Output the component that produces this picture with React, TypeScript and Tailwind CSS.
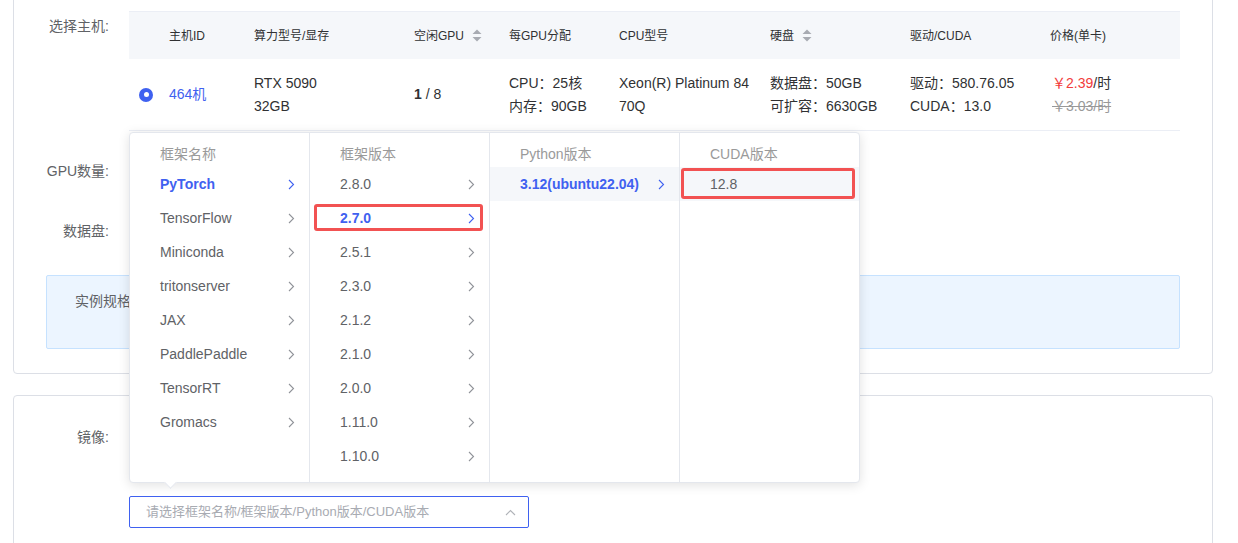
import React from 'react';

const BLUE = 'text-[#3f61f0]';

type Col = {
  title: string;
  width: string;
  items: string[];
  active?: number;
  hover?: number;
  boxed?: number;
  boxInset?: string;
  arrow?: boolean;
};

const columns: Col[] = [
  {
    title: '框架名称',
    width: 'w-[180px]',
    items: ['PyTorch', 'TensorFlow', 'Miniconda', 'tritonserver', 'JAX', 'PaddlePaddle', 'TensorRT', 'Gromacs'],
    active: 0,
    arrow: true,
  },
  {
    title: '框架版本',
    width: 'w-[180px]',
    items: ['2.8.0', '2.7.0', '2.5.1', '2.3.0', '2.1.2', '2.1.0', '2.0.0', '1.11.0', '1.10.0'],
    active: 1,
    boxed: 1,
    boxInset: 'top-[3px] bottom-[4px] left-[4px] right-[6px]',
    arrow: true,
  },
  {
    title: 'Python版本',
    width: 'w-[190px]',
    items: ['3.12(ubuntu22.04)'],
    active: 0,
    hover: 0,
    arrow: true,
  },
  {
    title: 'CUDA版本',
    width: 'flex-1',
    items: ['12.8'],
    hover: 0,
    boxed: 0,
    boxInset: 'top-[1px] bottom-[2px] left-[1px] right-[4px]',
  },
];

function Chevron({ className }: { className?: string }) {
  return (
    <svg width="7" height="11" viewBox="0 0 7 11" className={className} fill="none">
      <path d="M1 1l4.5 4.5L1 10" stroke="currentColor" strokeWidth="1.1" />
    </svg>
  );
}

function SortIcon() {
  return (
    <svg width="10" height="13" viewBox="0 0 10 13" className="ml-[8px] text-[#a8abb2]" fill="currentColor">
      <path d="M5 0.5L9.5 5H0.5z" />
      <path d="M5 12.5L9.5 8H0.5z" />
    </svg>
  );
}

function Cascader() {
  return (
    <div className="absolute left-0 bottom-[45px] w-[731px] h-[351px] bg-white border border-[#e4e7ed] rounded-[4px] shadow-[0_2px_12px_rgba(0,0,0,0.12)] flex z-10">
      {columns.map((col, ci) => (
        <div key={ci} className={`${col.width} h-full ${ci < 3 ? 'border-r border-[#e4e7ed]' : ''}`}>
          <div className="h-[34px] pt-[12px] pl-[30px] leading-[18px] text-[14px] text-[#9a9a9a]">{col.title}</div>
          {col.items.map((it, ii) => {
            const active = col.active === ii;
            const hover = col.hover === ii;
            return (
              <div
                key={it}
                className={`relative h-[34px] flex items-center justify-between pl-[30px] pr-[14px] text-[14px] ${
                  hover ? 'bg-[#f5f7fa]' : ''
                } ${active ? `${BLUE} font-bold` : 'text-[#606266]'}`}
              >
                <span>{it}</span>
                {col.arrow && <Chevron className={active ? 'text-[#3f61f0]' : 'text-[#909399]'} />}
                {col.boxed === ii && (
                  <div className={`absolute ${col.boxInset} border-[3px] border-[#f25252] rounded-[3px]`} />
                )}
              </div>
            );
          })}
        </div>
      ))}
      <div className="absolute left-[36px] -bottom-[5px] w-[9px] h-[9px] bg-white rotate-45 border-r border-b border-[#e4e7ed]" />
    </div>
  );
}

function HostTable() {
  const grid = 'grid grid-cols-[40px_85px_160px_95px_110px_151px_140px_140px_130px]';
  return (
    <div className="w-full">
      <div className={`${grid} h-[48px] items-center bg-[#f5f7fa] border-t border-[#ebeef5] text-[12px] text-[#303133]`}>
        <div />
        <div>主机ID</div>
        <div>算力型号/显存</div>
        <div className="flex items-center">空闲GPU<SortIcon /></div>
        <div>每GPU分配</div>
        <div>CPU型号</div>
        <div className="flex items-center">硬盘<SortIcon /></div>
        <div>驱动/CUDA</div>
        <div>价格(单卡)</div>
      </div>
      <div className={`${grid} h-[72px] items-center border-b border-[#ebeef5] text-[14px] leading-[23px] text-[#303133]`}>
        <div className="pl-[10px]">
          <div className="w-[14px] h-[14px] rounded-full bg-[#3f61f0] flex items-center justify-center">
            <div className="w-[5px] h-[5px] rounded-full bg-white" />
          </div>
        </div>
        <div className={BLUE}>464机</div>
        <div>
          <div>RTX 5090</div>
          <div>32GB</div>
        </div>
        <div>
          <span className="font-bold">1</span> / 8
        </div>
        <div>
          <div>CPU：25核</div>
          <div>内存：90GB</div>
        </div>
        <div className="pr-[14px] break-all">Xeon(R) Platinum 8470Q</div>
        <div>
          <div>数据盘：50GB</div>
          <div>可扩容：6630GB</div>
        </div>
        <div>
          <div>驱动：580.76.05</div>
          <div>CUDA：13.0</div>
        </div>
        <div className="pl-[2px]">
          <div>
            <span className="text-[#f23c3c]">￥2.39</span>/时
          </div>
          <div className="text-[#999] line-through">￥3.03/时</div>
        </div>
      </div>
    </div>
  );
}

const labelCls = 'w-[83px] shrink-0 pr-[20px] text-right whitespace-nowrap text-[14px] text-[#606266]';

export default function App() {
  return (
    <div className="w-[1238px] h-[543px] overflow-hidden bg-white font-['Liberation_Sans','Noto_Sans_CJK_SC',sans-serif]">
      <div className="pl-[13px] w-[1213px]">
        {/* 主机配置 */}
        <div className="-mt-[30px] pt-[40px] pb-[24px] px-[32px] border border-[#dcdfe6] rounded-[4px]">
          <div className="flex">
            <div className={`${labelCls} leading-[30px]`}>选择主机:</div>
            <HostTable />
          </div>
          <div className="flex mt-[20px] h-[40px]">
            <div className={`${labelCls} leading-[40px]`}>GPU数量:</div>
          </div>
          <div className="flex mt-[20px] h-[40px]">
            <div className={`${labelCls} leading-[40px]`}>数据盘:</div>
          </div>
          <div className="mt-[24px] h-[74px] bg-[#ecf5ff] border border-[#c6e2ff] rounded-[2px] pl-[28px] pt-[16px] text-[14px] leading-[18px] text-[#606266]">
            实例规格：RTX 5090 × 1
          </div>
        </div>

        {/* 镜像 */}
        <div className="mt-[21px] h-[200px] pt-[21px] px-[32px] border border-[#dcdfe6] rounded-[4px]">
          <div className="flex h-[40px]">
            <div className={`${labelCls} leading-[40px]`}>镜像:</div>
          </div>
          <div className="flex mt-[39px]">
            <div className="w-[83px] shrink-0" />
            <div className="relative">
              <Cascader />
              <div className="w-[400px] h-[32px] border border-[#3f61f0] rounded-[2px] flex items-center justify-between pl-[16px] pr-[12px] text-[13px] text-[#a8abb2]">
                <span>请选择框架名称/框架版本/Python版本/CUDA版本</span>
                <svg width="11" height="7" viewBox="0 0 11 7" fill="none" className="text-[#b0b3b8]">
                  <path d="M1 6l4.5-4.5L10 6" stroke="currentColor" strokeWidth="1.1" />
                </svg>
              </div>
            </div>
          </div>
        </div>
      </div>
    </div>
  );
}
